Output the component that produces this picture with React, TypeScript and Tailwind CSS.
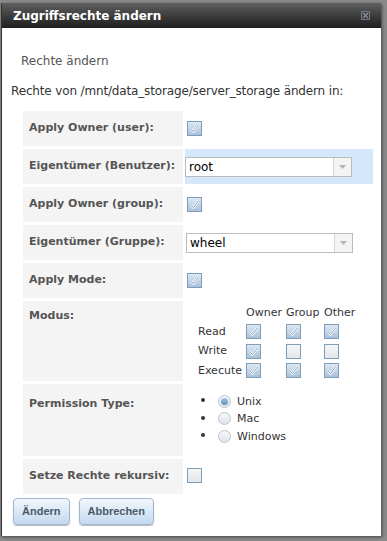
import React from "react";

const font = { fontFamily: "'DejaVu Sans', Verdana, sans-serif" };

function Check({ on = true }: { on?: boolean }) {
  return (
    <span className="inline-flex w-[15px] h-[15px] border border-[#7f9db9] bg-gradient-to-b from-[#dde8f2] to-[#a9c2da] items-center justify-center">
      {on && (
        <svg width="11" height="11" viewBox="0 0 11 11">
          <path d="M2 6 L4.5 8.5 L9.5 2" fill="none" stroke="#ffffff" strokeWidth="2.4" />
          <path d="M2 6 L4.5 8.5 L9.5 2" fill="none" stroke="#5a86b0" strokeWidth="0.8" />
        </svg>
      )}
      {!on && <span className="w-[13px] h-[13px] bg-gradient-to-b from-[#f6f6f6] to-[#e2e6ea]" />}
    </span>
  );
}

function Radio({ on = false }: { on?: boolean }) {
  return (
    <span className="inline-flex w-[13px] h-[13px] rounded-full border border-[#b8c4d0] bg-gradient-to-b from-[#f8f8f8] to-[#dfe5ea] items-center justify-center">
      {on && <span className="w-[7px] h-[7px] rounded-full bg-gradient-to-b from-[#a9c6e2] to-[#5b8dbd]" />}
    </span>
  );
}

function Select({ value }: { value: string }) {
  return (
    <div className="flex w-[167px] h-[20px] border border-[#bbbbbb] bg-white">
      <div className="flex-1 pl-[3px] text-[12px] leading-[18px] text-black">{value}</div>
      <div className="w-[18px] border-l border-[#d5d5d5] bg-[#f4f4f4] flex items-center justify-center">
        <svg width="7" height="4" viewBox="0 0 7 4">
          <path d="M0 0 L7 0 L3.5 4 Z" fill="#b4b4b4" />
        </svg>
      </div>
    </div>
  );
}

function Row({ label, h, children, hl = false, top }: { label: string; h: string; children: React.ReactNode; hl?: boolean; top?: string }) {
  return (
    <div className={`flex gap-[2px] ${h}`}>
      <div className={`w-[160px] bg-[#f4f4f4] pl-[6px] font-bold text-[11px] text-[#555555] flex ${top ? `items-start ${top}` : "items-center"}`}>
        {label}
      </div>
      <div className={`w-[188px] flex ${top ? "items-start" : "items-center"} ${hl ? "bg-[#d5e7fa]" : ""}`}>{children}</div>
    </div>
  );
}

export default function App() {
  return (
    <div className="w-[387px] h-[541px] bg-[#8a8a8a] pt-[3px] pl-[1px]" style={font}>
      <div className="w-[380px] h-[533px] bg-white border-l border-[#333333] flex flex-col shadow-[1px_1px_3px_#444]">
        <div className="h-[25px] bg-gradient-to-b from-[#606060] to-[#1e1e1e] flex items-center justify-between pl-[11px] pr-[10px]">
          <span className="text-white font-bold text-[12px]">Zugriffsrechte ändern</span>
          <svg width="11" height="11" viewBox="0 0 11 11">
            <rect x="1.5" y="1.5" width="8" height="8" fill="none" stroke="#6f7a86" strokeWidth="1" />
            <path d="M3 3 L8 8 M8 3 L3 8" stroke="#8893a0" strokeWidth="1.3" />
          </svg>
        </div>
        <div className="pl-[19px] pt-[24px] text-[12px] text-[#555555]">Rechte ändern</div>
        <div className="pl-[9px] pt-[12px] text-[12px] text-[#333333] tracking-[-0.15px]">Rechte von /mnt/data_storage/server_storage ändern in:</div>
        <div className="pl-[21px] pt-[11px] flex flex-col gap-[3px]">
          <Row label="Apply Owner (user):" h="h-[35px]">
            <span className="pl-[2px]"><Check /></span>
          </Row>
          <Row label="Eigentümer (Benutzer):" h="h-[35px]" hl>
            <Select value="root" />
          </Row>
          <Row label="Apply Owner (group):" h="h-[35px]">
            <span className="pl-[2px]"><Check /></span>
          </Row>
          <Row label="Eigentümer (Gruppe):" h="h-[35px]">
            <span className="pl-[1px]"><Select value="wheel" /></span>
          </Row>
          <Row label="Apply Mode:" h="h-[35px]">
            <span className="pl-[2px]"><Check /></span>
          </Row>
          <Row label="Modus:" h="h-[80px]" top="pt-[7px]">
            <div className="grid grid-cols-[48px_40px_38px_34px] text-[11px] text-[#333333] pl-[13px] pt-[4px] gap-y-[3px] items-center">
              <span />
              <span className="-mb-[1px]">Owner</span>
              <span className="-mb-[1px]">Group</span>
              <span className="-mb-[1px]">Other</span>
              <span>Read</span>
              <Check />
              <Check />
              <Check />
              <span>Write</span>
              <Check />
              <Check on={false} />
              <Check on={false} />
              <span>Execute</span>
              <Check />
              <Check />
              <Check />
            </div>
          </Row>
          <Row label="Permission Type:" h="h-[72px]" top="pt-[12px]">
            <ul className="list-disc pl-[31px] pt-[8px] text-[11px] text-[#333333] flex flex-col gap-[1px] marker:text-[14px]">
              {["Unix", "Mac", "Windows"].map((t, i) => (
                <li key={t} className="leading-[15px] pl-[2px]">
                  <span className="inline-flex items-center gap-[6px] align-middle">
                    <Radio on={i === 0} />
                    {t}
                  </span>
                </li>
              ))}
            </ul>
          </Row>
          <Row label="Setze Rechte rekursiv:" h="h-[35px]">
            <span className="pl-[2px]"><Check on={false} /></span>
          </Row>
        </div>
        <div className="flex gap-[9px] pl-[11px] pt-[4px]">
          {["Ändern", "Abbrechen"].map((b) => (
            <button
              key={b}
              className="h-[27px] px-[8px] rounded-[4px] border border-[#9fb6cf] bg-gradient-to-b from-[#f2f7fc] to-[#c4d9ef] text-[11px] font-bold text-[#4a5a6a] shadow-[0_1px_1px_#bbb]"
              style={{ fontFamily: "'Liberation Sans', Arial, sans-serif" }}
            >
              {b}
            </button>
          ))}
        </div>
      </div>
    </div>
  );
}
